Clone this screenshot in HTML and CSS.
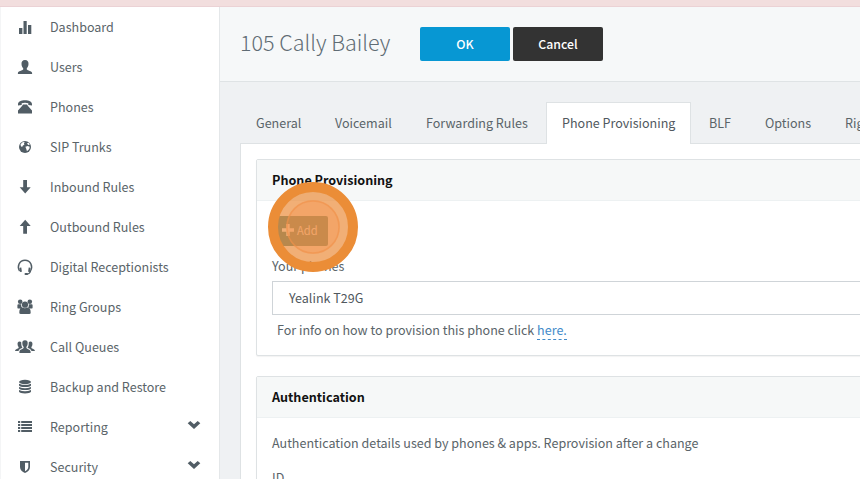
FILE: index.html
```html
<!DOCTYPE html>
<html lang="en">
<head>
<meta charset="utf-8">
<title>105 Cally Bailey</title>
<link rel="stylesheet" href="styles.css">
</head>
<body>
<div class="notice"></div>
<div class="layout">
  <nav class="sidebar">
    <a class="item"><svg class="icon" viewBox="0 0 20 16"><path d="M4 9h3.400v6H4zM8.500 2h3.200v13H8.500zM13 6h3.300v9H13z"/></svg><span>Dashboard</span></a>
    <a class="item"><svg class="icon" viewBox="0 0 20 16"><path d="M10 1C7.500 1 6.300 2.700 6.500 5c.1 2 .8 3.500 1.700 4.300v1.200c-.6 1-5.300 1.600-5.300 3.500v1h14.200v-1c0-1.900-4.700-2.500-5.300-3.500V9.300c.9-.8 1.600-2.300 1.700-4.300C13.700 2.700 12.500 1 10 1z"/></svg><span>Users</span></a>
    <a class="item"><svg class="icon" viewBox="0 0 20 16"><path d="M3 5.500C3 2.300 6.200 1.300 10 1.300s7 1 7 4.200v1.100l-3.700-.5V4.200C11.500 3.500 8.500 3.500 6.700 4.200v1.900L3 6.600zM8 5.500h4l1 1.500 4 4.500V14.500H3v-3L7 7z"/></svg><span>Phones</span></a>
    <a class="item"><svg class="icon" viewBox="0 0 20 16"><circle cx="10" cy="8" r="6"/><path class="cut" d="M5.500 5.500l1.600-2 1.700-.6 1 .7-.9 1 .5 1.100-1.500.9-.6 1.100-1.300-.2zM12 4.300l1.600-.6 1.300 1.700-1.700.6zM10.400 7.700l2.300-.7 2 .8-.3 2-1.500 1.700-1 .5-.6-2z"/></svg><span>SIP Trunks</span></a>
    <a class="item"><svg class="icon" viewBox="0 0 20 16"><path d="M8.200 1h3.800v7.200h3.700L10.200 14.500 4.700 8.200h3.500z"/></svg><span>Inbound Rules</span></a>
    <a class="item"><svg class="icon" viewBox="0 0 20 16"><path d="M8.200 14.800h3.800V7h3.700L10.200.8 4.700 7h3.500z"/></svg><span>Outbound Rules</span></a>
    <a class="item"><svg class="icon" viewBox="0 0 20 16"><path class="line" d="M4.500 12C1.700 7.500 4.400 1.200 10 1.200s8.300 6.300 5.500 10.800M15.500 12q-.5 3-4.500 3.200"/><path d="M4.300 8.700l2-.3.600 4.300-2 .3zM15.700 8.700l-2-.3-.6 4.300 2 .3z"/><rect x="9.500" y="14" width="3.500" height="2" rx="1"/></svg><span>Digital Receptionists</span></a>
    <a class="item"><svg class="icon" viewBox="0 0 20 16"><circle cx="5.200" cy="2.800" r="2.300"/><circle cx="14.800" cy="2.800" r="2.300"/><circle cx="10" cy="5.700" r="3.100"/><path d="M2.400 8.700V6.200q0-1 1-1h2.800q-.3 2.200.8 3.500l-1.500.9H4q-1.600 0-1.600-.9zM17.600 8.700V6.200q0-1-1-1h-2.800q.3 2.200-.8 3.500l1.500.9H16q1.600 0 1.600-.9zM4.300 13.800c0-3.300.9-5.300 3.200-5.300q2.200 1.500 5 0c2.300 0 3.200 2 3.200 5.300q0 1.200-1.500 1.200H5.800q-1.500 0-1.500-1.200z"/></svg><span>Ring Groups</span></a>
    <a class="item"><svg class="icon" viewBox="0 0 20 16"><path d="M10 1.200c-1.900 0-2.800 1.200-2.700 3 .1 1.700.6 2.800 1.300 3.500v1.400c-.5 1-4.200 1.500-4.200 3.700V14h11.200v-1.200c0-2.200-3.700-2.700-4.200-3.700V7.700c.7-.7 1.200-1.800 1.300-3.500.1-1.800-.8-3-2.700-3zM4.600 2.500C2.800 2.500 2.400 3.900 2.600 5.500c.1 1.300.5 2 1 2.600v1C3 9.800.1 10.200.1 12h3.400c.4-2 3-2.500 4-3.400-.9-.7-1.400-3.200-1.200-5q-.5-1.100-1.700-1.100zM15.400 2.500c1.800 0 2.200 1.400 2 3-.1 1.300-.5 2-1 2.600v1c.6.7 3.500 1.100 3.500 2.900h-3.400c-.4-2-3-2.500-4-3.400.9-.7 1.400-3.200 1.200-5q.5-1.100 1.700-1.100z"/></svg><span>Call Queues</span></a>
    <a class="item"><svg class="icon" viewBox="0 0 20 16"><ellipse cx="10" cy="3" rx="6" ry="2.200"/><path d="M4 4.800q6 2.500 12 0v1.700q-1.200 1.500-6 1.500T4 6.500zM4 8q6 2.500 12 0v1.500Q14.800 11 10 11T4 9.500zM4 11.100q6 2.500 12 0v1.700q-1.200 1.700-6 1.700t-6-1.700z"/></svg><span>Backup and Restore</span></a>
    <a class="item"><svg class="icon" viewBox="0 0 20 16"><path d="M3 2h2.200v2H3zM6.200 2H17v2H6.200zM3 5h2.200v2H3zM6.200 5H17v2H6.200zM3 8h2.200v2H3zM6.200 8H17v2H6.200zM3 11h2.200v2H3zM6.200 11H17v2H6.200z"/></svg><span>Reporting</span><svg class="chevron" viewBox="0 0 14 10"><path d="M.7 3.300L3.300 1 7 4.300 10.700 1l2.600 2.300L7 9z"/></svg></a>
    <a class="item"><svg class="icon" viewBox="0 0 20 16"><path d="M5 2h10v6c0 3-2.300 4.700-5 6-2.700-1.300-5-3-5-6z"/><path class="cut" d="M10 3.700h3.300v4.300c0 2-1.500 3.200-3.300 4.200z"/></svg><span>Security</span><svg class="chevron" viewBox="0 0 14 10"><path d="M.7 3.300L3.300 1 7 4.300 10.700 1l2.600 2.300L7 9z"/></svg></a>
  </nav>
  <main class="main">
    <header class="header">
      <h1 class="title">105 Cally Bailey</h1>
      <button class="btn ok">OK</button>
      <button class="btn cancel">Cancel</button>
    </header>
    <div class="content">
      <div class="tabs">
        <a class="tab general">General</a>
        <a class="tab voicemail">Voicemail</a>
        <a class="tab forwarding">Forwarding Rules</a>
        <a class="tab active">Phone Provisioning</a>
        <a class="tab blf">BLF</a>
        <a class="tab options">Options</a>
        <a class="tab rights">Rights</a>
      </div>
      <div class="panel">
        <section class="card">
          <h2 class="card-title">Phone Provisioning</h2>
          <div class="card-body">
            <div class="add-row">
              <button class="add"><svg class="plus" viewBox="0 0 12 12"><path d="M4.300 0h3.400v4.300H12v3.400H7.700V12H4.300V7.700H0V4.300h4.300z"/></svg>Add</button>
              <svg class="pulse" viewBox="0 0 90 90"><circle class="glow" cx="45" cy="45" r="36"/><circle class="core" cx="45" cy="45" r="27"/><circle class="inner" cx="45" cy="45" r="26"/><circle class="ring" cx="45" cy="45" r="40"/></svg>
            </div>
            <label class="label">Your phones</label>
            <div class="select">Yealink T29G</div>
            <p class="info">For info on how to provision this phone click <a class="link">here.</a></p>
          </div>
        </section>
        <section class="card">
          <h2 class="card-title">Authentication</h2>
          <div class="card-body">
            <p class="desc">Authentication details used by phones &amp; apps. Reprovision after a change</p>
            <label class="label">ID</label>
          </div>
        </section>
      </div>
    </div>
  </main>
</div>
</body>
</html>
```
FILE: styles.css
```css
* { box-sizing: border-box; }
body {
  margin: 0;
  height: 479px;
  overflow: hidden;
  background: #eff1f3;
  color: #5a6469;
  font: 12.54px/20px "Noto Sans CJK SC", "Noto Sans", sans-serif;
}
.notice { height: 7px; background: #f2dede; border-bottom: 1px solid #ebd2d5; }
.layout { display: flex; height: 472px; }
.sidebar { width: 220px; flex: none; background: #fff; border-right: 1px solid #e4e7e9; border-left: 1px solid #f4f5f6; }
.item { display: flex; align-items: center; height: 40px; padding: 0 18px 0 14px; }
.icon { width: 20px; height: 16px; margin-right: 15px; fill: #515d65; overflow: visible; }
.icon .cut { fill: #fff; }
.icon .line { fill: none; stroke: #515d65; stroke-width: 1.4; }
.chevron { width: 14px; height: 10px; margin: 0 0 4px auto; fill: #515d65; }
.main { flex: 1; min-width: 0; overflow: hidden; }
.header { display: flex; height: 75px; padding: 20px 0 0 20px; background: #f6f8f9; border-bottom: 1px solid #dfe3e5; }
.title { width: 180px; margin: -2px 0 0; font-size: 21.5px; line-height: 34px; font-weight: 300; color: #5f6c74; white-space: nowrap; }
.btn { width: 90px; height: 34px; margin-right: 3px; padding: 0; border: 0; border-radius: 2px; color: #fff; font: 500 12.300px/34px "Noto Sans CJK SC", sans-serif; }
.ok { background: #0797d3; }
.cancel { background: #333; }
.content { padding: 20px 0 0 20px; width: 720px; }
.tabs { display: flex; height: 42px; margin-left: -1px; }
.tab { flex: none; height: 42px; line-height: 42px; padding-left: 17px; white-space: nowrap; }
.general { width: 79px; }
.voicemail { width: 91px; }
.forwarding { width: 137px; }
.tab.active { width: 145px; padding-left: 15px; line-height: 40px; background: #fff; border: 1px solid #dee2e4; border-bottom: 0; color: #50585e; position: relative; z-index: 1; }
.blf { width: 57px; padding-left: 18px; }
.options { width: 80px; }
.rights { padding-left: 17px; }
.panel { height: 400px; margin-top: -1px; padding: 15px 0 0 15px; background: #fff; border: 1px solid #dee2e4; }
.card { background: #fff; border: 1px solid #dee2e4; border-radius: 2px; box-shadow: 0 1px 1px rgba(0,0,0,.05); height: 197px; margin-bottom: 20px; }
.card-title { height: 41px; margin: 0; padding-left: 15px; background: #f6f8f8; border-bottom: 1px solid #edf1f2; color: #111; font-size: 12.6px; line-height: 40px; font-weight: 700; }
.card-body { padding: 15px 0 0 15px; }
.add-row { position: relative; height: 40px; }
.add { display: flex; align-items: center; width: 56px; height: 30px; padding: 0 0 2px 10px; border: 0; border-radius: 2px; background: #3c7d75; color: #fff; font: 11.200px/28px "Noto Sans CJK SC", sans-serif; }
.plus { width: 12px; height: 12px; margin: 0 3px 1px 0; fill: #fff; flex: none; }
.pulse { position: absolute; left: -4px; top: -34px; width: 90px; height: 90px; }
.glow { fill: #eb8d3c; fill-opacity: .7; }
.core { fill: #fa9048; fill-opacity: .3; }
.inner { fill: none; stroke: #f0914a; stroke-width: 1.5; stroke-opacity: .6; }
.ring { fill: none; stroke: #eb8d37; stroke-width: 10; }
.label { display: block; height: 25px; }
.select { height: 34px; padding-left: 16px; line-height: 32px; border: 1px solid #cfd4d8; color: #50585e; }
.info { margin: 5px 0 0 5px; line-height: 20px; }
.link { display: inline-block; height: 20px; color: #428bca; border-bottom: 1px dashed #428bca; }
.desc { margin: 0 0 15px; }
```
